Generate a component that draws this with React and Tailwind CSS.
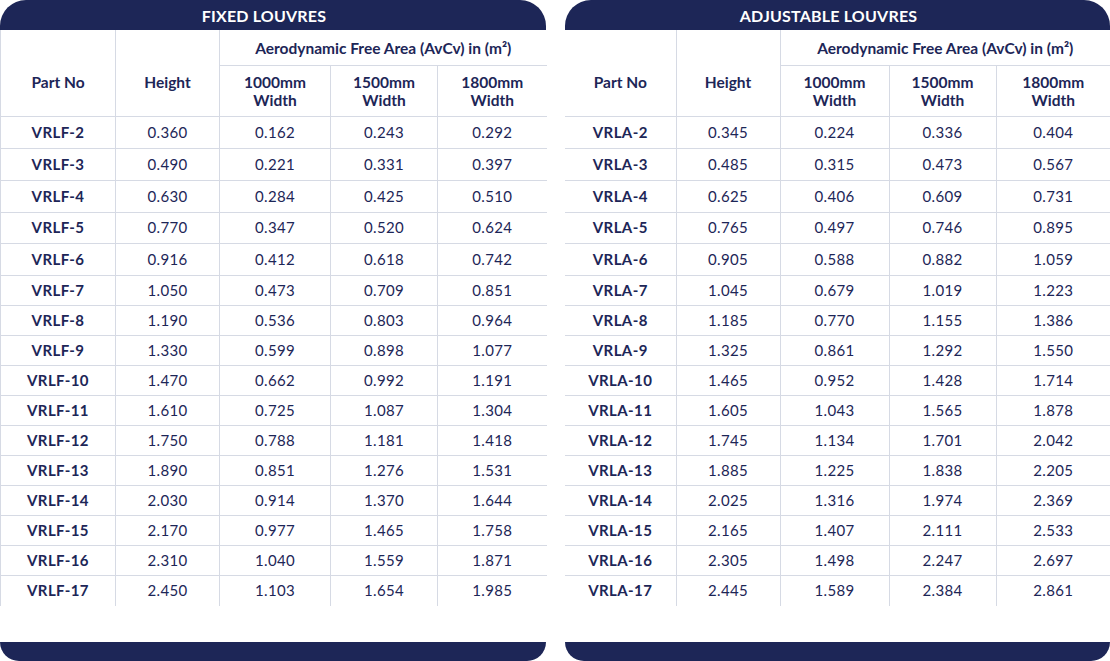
import React from "react";

const fixed = [
  ["VRLF-2", "0.360", "0.162", "0.243", "0.292"],
  ["VRLF-3", "0.490", "0.221", "0.331", "0.397"],
  ["VRLF-4", "0.630", "0.284", "0.425", "0.510"],
  ["VRLF-5", "0.770", "0.347", "0.520", "0.624"],
  ["VRLF-6", "0.916", "0.412", "0.618", "0.742"],
  ["VRLF-7", "1.050", "0.473", "0.709", "0.851"],
  ["VRLF-8", "1.190", "0.536", "0.803", "0.964"],
  ["VRLF-9", "1.330", "0.599", "0.898", "1.077"],
  ["VRLF-10", "1.470", "0.662", "0.992", "1.191"],
  ["VRLF-11", "1.610", "0.725", "1.087", "1.304"],
  ["VRLF-12", "1.750", "0.788", "1.181", "1.418"],
  ["VRLF-13", "1.890", "0.851", "1.276", "1.531"],
  ["VRLF-14", "2.030", "0.914", "1.370", "1.644"],
  ["VRLF-15", "2.170", "0.977", "1.465", "1.758"],
  ["VRLF-16", "2.310", "1.040", "1.559", "1.871"],
  ["VRLF-17", "2.450", "1.103", "1.654", "1.985"],
];

const adjustable = [
  ["VRLA-2", "0.345", "0.224", "0.336", "0.404"],
  ["VRLA-3", "0.485", "0.315", "0.473", "0.567"],
  ["VRLA-4", "0.625", "0.406", "0.609", "0.731"],
  ["VRLA-5", "0.765", "0.497", "0.746", "0.895"],
  ["VRLA-6", "0.905", "0.588", "0.882", "1.059"],
  ["VRLA-7", "1.045", "0.679", "1.019", "1.223"],
  ["VRLA-8", "1.185", "0.770", "1.155", "1.386"],
  ["VRLA-9", "1.325", "0.861", "1.292", "1.550"],
  ["VRLA-10", "1.465", "0.952", "1.428", "1.714"],
  ["VRLA-11", "1.605", "1.043", "1.565", "1.878"],
  ["VRLA-12", "1.745", "1.134", "1.701", "2.042"],
  ["VRLA-13", "1.885", "1.225", "1.838", "2.205"],
  ["VRLA-14", "2.025", "1.316", "1.974", "2.369"],
  ["VRLA-15", "2.165", "1.407", "2.111", "2.533"],
  ["VRLA-16", "2.305", "1.498", "2.247", "2.697"],
  ["VRLA-17", "2.445", "1.589", "2.384", "2.861"],
];

const rowHeights = [32, 32, 32, 31, 32, 30, 30, 30, 30, 30, 30, 30, 30, 30, 30, 31];

function Panel({ title, rows, widths, leftBorder }) {
  return (
    <div className="flex h-[661px] flex-col">
      <div className="flex h-[30px] items-center justify-center rounded-t-[26px] bg-[#1d2657] pr-[18px] pt-[1px] text-[16px] font-bold tracking-[0.2px] text-white">
        {title}
      </div>
      <table className="w-full table-fixed border-collapse text-[#1d2657]">
        <colgroup>
          {widths.map((w, i) => (
            <col key={i} style={{ width: w }} />
          ))}
        </colgroup>
        <thead>
          <tr className="h-[35px]">
            <th
              rowSpan={2}
              className={`border-b border-r border-[#d6dae4] pt-[20px] text-[15.5px] font-bold ${leftBorder ? "border-l" : ""}`}
            >
              Part No
            </th>
            <th rowSpan={2} className="border-b border-r border-[#d6dae4] pt-[20px] text-[15.5px] font-bold">
              Height
            </th>
            <th colSpan={3} className="border-b border-[#d6dae4] pt-[2px] text-[15.5px] font-bold">
              Aerodynamic Free Area (AvCv) in (m²)
            </th>
          </tr>
          <tr className="h-[51px]">
            {["1000mm", "1500mm", "1800mm"].map((w, i) => (
              <th
                key={w}
                className={`border-b border-[#d6dae4] pt-[1px] text-[15.5px] font-bold leading-[18px] ${i < 2 ? "border-r" : ""}`}
              >
                {w}
                <br />
                Width
              </th>
            ))}
          </tr>
        </thead>
        <tbody>
          {rows.map((r, ri) => (
            <tr key={r[0]} style={{ height: rowHeights[ri] }}>
              {r.map((c, ci) => (
                <td
                  key={ci}
                  className={`text-center text-[15px] ${ri < rows.length - 1 ? "border-b" : "pb-[2px]"} border-[#d6dae4] ${
                    ci < 4 ? "border-r" : ""
                  } ${ci === 0 ? "font-bold tracking-[0.4px]" : "font-normal tracking-[0.3px]"} ${
                    ci === 0 && leftBorder ? "border-l" : ""
                  }`}
                >
                  {c}
                </td>
              ))}
            </tr>
          ))}
        </tbody>
      </table>
      <div className="flex-1" />
      <div className="h-[19px] rounded-b-[20px] bg-[#1d2657]" />
    </div>
  );
}

export default function App() {
  return (
    <div
      className="flex h-[661px] w-[1110px] gap-[19px] overflow-hidden bg-white"
      style={{ fontFamily: "Lato, 'Noto Sans', sans-serif" }}
    >
      <div className="w-[546px]">
        <Panel title="FIXED LOUVRES" rows={fixed} widths={[115, 104, 111, 107, 109]} leftBorder />
      </div>
      <div className="w-[545px]">
        <Panel title="ADJUSTABLE LOUVRES" rows={adjustable} widths={[111, 104, 109, 107, 114]} />
      </div>
    </div>
  );
}
